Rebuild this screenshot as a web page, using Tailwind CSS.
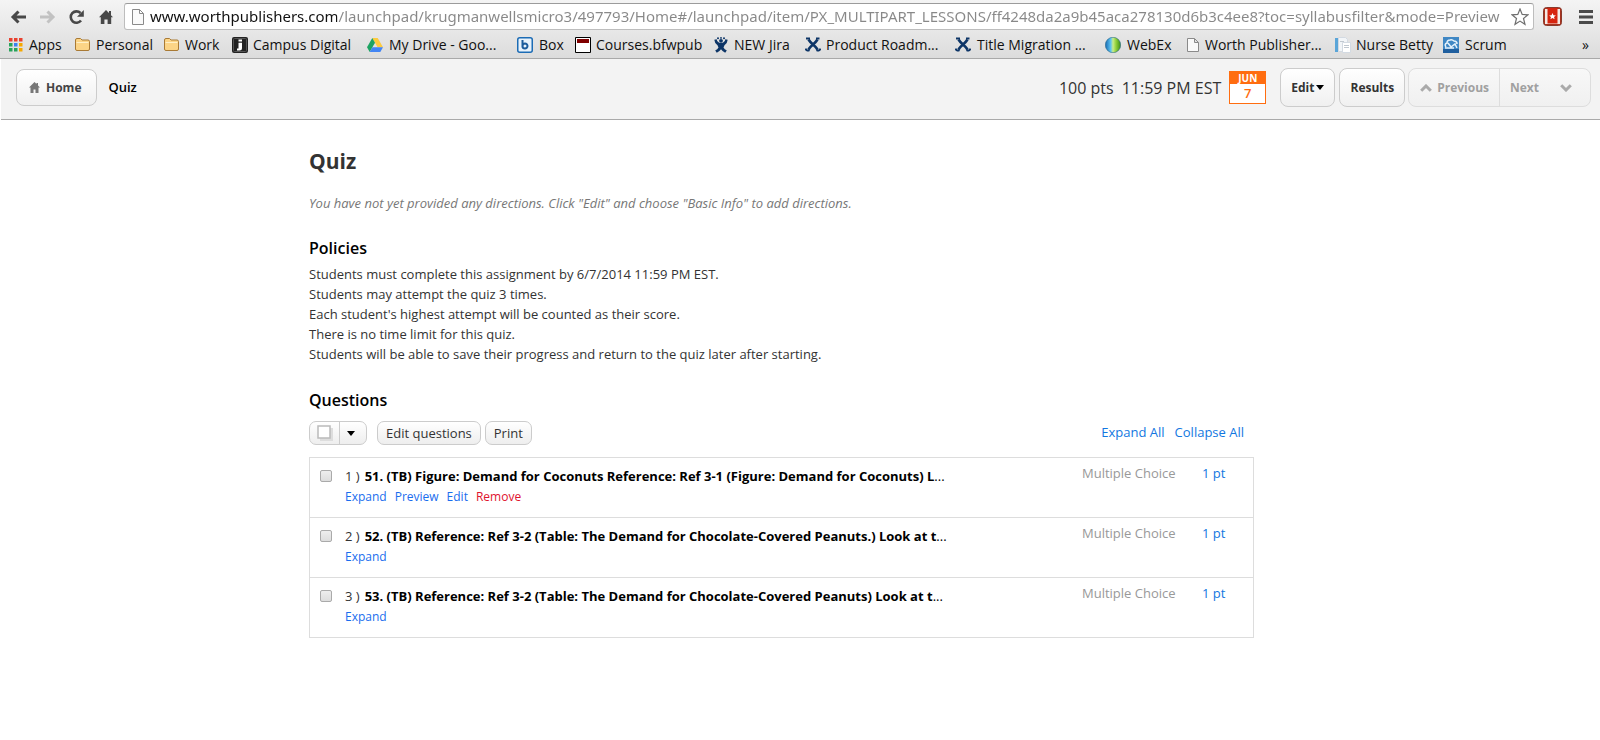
<!DOCTYPE html>
<html lang="en">
<head>
<meta charset="utf-8">
<title>Quiz</title>
<script src="https://cdn.jsdelivr.net/npm/@tailwindcss/browser@4"></script>
</head>
<body class="bg-white font-['Open_Sans',sans-serif] text-[13px] text-[#333]">

<!-- Browser toolbar -->
<div class="border-b border-[#a9a9a9] bg-linear-to-b from-[#f4f4f4] to-[#dcdcdc]">
  <nav class="flex h-[31px] items-center pt-[2px] pl-[10px] pr-[7px]" aria-label="Browser">
    <button class="w-[29px]" aria-label="Back"><svg width="17" height="16" viewBox="0 0 17 16" fill="none" stroke="#484848" stroke-width="3"><path d="M16 8H3M8.500 2.500L3 8l5.500 5.500"/></svg></button>
    <button class="w-[29px]" aria-label="Forward"><svg width="17" height="16" viewBox="0 0 17 16" fill="none" stroke="#c2c2c2" stroke-width="3"><path d="M1 8h13M8.500 2.500L14 8l-5.500 5.500"/></svg></button>
    <button class="w-[30px]" aria-label="Reload"><svg width="17" height="16" viewBox="0 0 17 16"><path d="M13 11.500A5.700 5.700 0 1 1 12.500 4" fill="none" stroke="#484848" stroke-width="2.600"/><path d="M15.800 1v6.800H9z" fill="#484848"/></svg></button>
    <button class="w-[26px]" aria-label="Home page"><svg width="16" height="16" viewBox="0 0 16 16" fill="#484848"><path d="M8 1L1 8.300h1.800V15h3.600v-4.500h3.200V15h3.600V8.300H15L13 6.200V2h-2v2.100z"/></svg></button>
    <div class="flex h-[27px] flex-1 items-center rounded-[3px] border border-[#bdbdbd] border-t-[#9b9b9b] bg-white pl-[7px] pr-[4px]">
      <svg class="shrink-0" width="12" height="16" viewBox="0 0 12 16" fill="#fafafa" stroke="#8a8a8a"><path d="M.5.5h7l4 4v11H.5zM7.500.5v4h4"/></svg>
      <input class="ml-[6px] min-w-0 flex-1 bg-[linear-gradient(to_right,#111_0,#111_187px,#888_187px)] bg-clip-text font-['Noto_Sans',sans-serif] text-[15px] text-transparent outline-none" aria-label="Address" value="www.worthpublishers.com/launchpad/krugmanwellsmicro3/497793/Home#/launchpad/item/PX_MULTIPART_LESSONS/ff4248da2a9b45aca278130d6b3c4ee8?toc=syllabusfilter&amp;mode=Preview">
      <button aria-label="Bookmark this page"><svg width="18" height="18" viewBox="0 0 18 18" fill="#fff" stroke="#6e6e6e" stroke-width="1.200"><path d="M9 1l2.200 5.400 5.800.4-4.500 3.700 1.500 5.800L9 13.100l-5 3.200 1.500-5.800L1 6.800l5.800-.4z"/></svg></button>
    </div>
    <button class="ml-[9px]" aria-label="Extension"><svg width="19" height="19" viewBox="0 0 19 19"><rect x=".5" y=".5" width="18" height="18" rx="3" fill="#a8331f" stroke="#8a3a2c"/><rect x="2" y="2" width="15" height="15" fill="#f4e9e4"/><path d="M4.500 1h10v15.500h-10z" fill="#d6240f"/><path d="M9.500 6l1 2.200 2.400.2-1.900 1.500.6 2.400-2.100-1.300-2.100 1.300.6-2.400-1.900-1.500 2.400-.2z" fill="#fff"/></svg></button>
    <button class="ml-[17px]" aria-label="Menu"><svg width="14" height="14" viewBox="0 0 14 14" fill="#4a4a4a"><path d="M0 0h14v3H0zM0 5.500h14v3H0zM0 11h14v3H0z"/></svg></button>
  </nav>

  <nav class="flex h-[27px] items-center pl-[9px] pr-[11px] text-[14px] whitespace-nowrap text-[#111]" aria-label="Bookmarks">
    <a href="#" class="flex w-[66px] items-center gap-[6px]"><svg width="14" height="14" viewBox="0 0 14 14"><path d="M0 0h3.500v3.500H0zM5 0h3.500v3.500H5zM10 0h3.500v3.500H10z" fill="#e8402e"/><path d="M0 5h3.500v3.500H0zM0 10h3.500v3.500H0zM5 10h3.500v3.500H5z" fill="#28a35a"/><path d="M5 5h3.500v3.500H5z" fill="#3b82f0"/><path d="M10 5h3.500v3.500H10zM10 10h3.500v3.500H10z" fill="#f5a800"/></svg>Apps</a>
    <a href="#" class="flex w-[89px] items-center gap-[6px]"><svg width="15" height="13" viewBox="0 0 15 13"><path d="M.5 11V2q0-1.500 1.500-1.500h3.500L7 2h6q1.500 0 1.500 1.500V11q0 1.500-1.500 1.500H2Q.5 12.500.5 11z" fill="#fcd486" stroke="#a97a35"/><path d="M1.500 4.500h12" stroke="#fff0c8"/></svg>Personal</a>
    <a href="#" class="flex w-[68px] items-center gap-[6px]"><svg width="15" height="13" viewBox="0 0 15 13"><path d="M.5 11V2q0-1.500 1.500-1.500h3.500L7 2h6q1.500 0 1.500 1.500V11q0 1.500-1.500 1.500H2Q.5 12.500.5 11z" fill="#fcd486" stroke="#a97a35"/><path d="M1.500 4.500h12" stroke="#fff0c8"/></svg>Work</a>
    <a href="#" class="flex w-[135px] items-center gap-[5px]"><svg width="16" height="16" viewBox="0 0 16 16"><rect width="16" height="16" rx="2" fill="#222"/><rect x="1.500" y="1.500" width="13" height="13" rx="1" fill="none" stroke="#555"/><path d="M6.500 2.500h3.500v2H6.500zM6.500 5.800h3.500V11q0 2.500-2.500 2.500H5v-2h1.500z" fill="#fff"/></svg>Campus Digital</a>
    <a href="#" class="flex w-[150px] items-center gap-[6px]"><svg width="16" height="14" viewBox="0 0 16 14"><path d="M5.300 0h5.400L16 9.200h-5.400z" fill="#fdcb3f"/><path d="M5.300 0L8 4.700 2.700 14 0 9.200z" fill="#1da362"/><path d="M5.400 9.200H16L13.300 14H2.700z" fill="#4285f4"/></svg>My Drive - Goo...</a>
    <a href="#" class="flex w-[58px] items-center gap-[6px]"><svg width="16" height="16" viewBox="0 0 16 16"><rect x=".75" y=".75" width="14.500" height="14.500" rx="2" fill="#e8f2fb" stroke="#1c6cb5" stroke-width="1.500"/><path d="M5.500 3v7.500M5.500 9a2.500 2.500 0 1 0 5 0 2.500 2.500 0 1 0-5 0" fill="none" stroke="#1c5c9c" stroke-width="2"/></svg>Box</a>
    <a href="#" class="flex w-[139px] items-center gap-[5px]"><svg width="16" height="16" viewBox="0 0 16 16"><path d="M.5.5h15v15H.5z" fill="#fff" stroke="#000"/><path d="M2 2h12v4H2z" fill="#800000"/></svg>Courses.bfwpub</a>
    <a href="#" class="flex w-[91px] items-center gap-[6px]"><svg width="14" height="16" viewBox="0 0 14 16" fill="#0d3567"><circle cx="7" cy="3.800" r="1.900"/><circle cx="4" cy="1.300" r="1"/><circle cx="7" cy=".9" r=".9"/><circle cx="10" cy="1.300" r="1"/><path d="M.3 2.800l2.400-.6q.3 3.300 4.300 3.800 4-.5 4.300-3.800l2.400.6q-.3 3.700-3.200 5.400l-1 2.300q1 2 3.300 3l-1.600 2.200Q8.500 14.500 7 12.200q-1.500 2.300-4.200 3.500l-1.600-2.200q2.300-1 3.300-3l-1-2.300Q.6 6.500.3 2.800z"/></svg>NEW Jira</a>
    <a href="#" class="flex w-[150px] items-center gap-[5px]"><svg width="16" height="16" viewBox="0 0 16 16" fill="none" stroke="#0d3567" stroke-width="2.600"><path d="M3.500 2.500Q5 5 8 7.500t4.500 5M12.500 2.500Q11 5 8 7.500t-4.500 5"/><path d="M1 1.500h4M11 1.500h3.500M.5 11.500q1 3 4 1.500M15.500 11.500q-1 3-4 1.500" stroke-width="2"/></svg>Product Roadm...</a>
    <a href="#" class="flex w-[150px] items-center gap-[6px]"><svg width="16" height="16" viewBox="0 0 16 16" fill="none" stroke="#0d3567" stroke-width="2.600"><path d="M3.500 2.500Q5 5 8 7.500t4.500 5M12.500 2.500Q11 5 8 7.500t-4.500 5"/><path d="M1 1.500h4M11 1.500h3.500M.5 11.500q1 3 4 1.500M15.500 11.500q-1 3-4 1.500" stroke-width="2"/></svg>Title Migration ...</a>
    <a href="#" class="flex w-[82px] items-center gap-[6px]"><svg width="16" height="16" viewBox="0 0 16 16"><defs><linearGradient id="globe"><stop offset="0" stop-color="#1668b0"/><stop offset=".35" stop-color="#5cc3f2"/><stop offset=".5" stop-color="#c9ec8a"/><stop offset=".7" stop-color="#8fd03a"/><stop offset="1" stop-color="#3b8a1c"/></linearGradient></defs><circle cx="8" cy="8" r="7.700" fill="url(#globe)" stroke="#2a6a8a" stroke-width=".6"/></svg>WebEx</a>
    <a href="#" class="flex w-[148px] items-center gap-[6px]"><svg width="12" height="14" viewBox="0 0 12 14" fill="#fafafa" stroke="#8a8a8a"><path d="M.5.5h7l4 4v9H.5zM7.500.5v4h4"/></svg>Worth Publisher...</a>
    <a href="#" class="flex w-[108px] items-center gap-[5px]"><svg width="16" height="16" viewBox="0 0 16 16"><path d="M0 1h3v14H0z" fill="#5aa5d8"/><path d="M3.500.5h7l2 2v12h-9z" fill="#f2f5f8" stroke="#d3dae2"/><path d="M7.500 5.500h8v10h-8z" fill="#fff" stroke="#d3dae2"/><path d="M5 4.500h4M9 8.500h5M9 10.500h5" stroke="#c0c8d0"/></svg>Nurse Betty</a>
    <a href="#" class="flex items-center gap-[6px]"><svg width="16" height="16" viewBox="0 0 16 16"><path d="M0 0h16v16H0z" fill="#3f87c4"/><path d="M0 12h16v4H0z" fill="#1f5f9f"/><path d="M3 10q-2-3 1-4 0-3 3-3 2-1 4 1 3 0 3 3M5 6l3 4 4-3 2 4M2 11h9" fill="none" stroke="#e4f1fb" stroke-width="1.500"/></svg>Scrum</a>
    <button class="ml-auto" aria-label="More bookmarks">»</button>
  </nav>
</div>

<!-- Assignment header -->
<header class="ml-px flex h-[61px] items-center border-b border-[#a9a9a9] bg-[#f3f3f3] pb-[3px] pl-[15px] pr-[9px] text-[12px]">
  <button class="flex h-[37px] items-center gap-[6px] rounded-[8px] border border-[#ccc] bg-linear-to-b from-white to-[#f0f0f0] pl-[12px] pr-[15px] font-bold text-[#444]"><svg width="11" height="11" viewBox="0 0 11 11" fill="#777"><path d="M5.500 0L0 5.500h1.500V11h3V7.500h2V11h3V5.500H11L9 3.500V1H7.500v1z"/></svg>Home</button>
  <h2 class="ml-[11px] text-[13px] font-semibold text-black">Quiz</h2>
  <div class="ml-auto flex items-center text-[16px]">
    <span>100 pts</span><span class="ml-[8px]">11:59 PM EST</span>
    <time datetime="2014-06-07" class="ml-[8px] flex h-[33px] w-[37px] flex-col border border-[#ff6d10] bg-white text-center text-[#ff6d10]"><span class="h-[12px] bg-[#ff6d10] text-[10px] leading-[12px] font-bold text-white">JUN</span><span class="text-[13px] leading-[19px] font-semibold">7</span></time>
  </div>
  <button class="ml-[14px] flex h-[39px] items-center gap-[2px] rounded-[8px] border border-[#ccc] bg-linear-to-b from-white to-[#f0f0f0] px-[10px] font-bold">Edit<svg width="8" height="5" viewBox="0 0 8 5"><path d="M0 0h8L4 5z"/></svg></button>
  <button class="ml-[4px] h-[39px] rounded-[8px] border border-[#ccc] bg-linear-to-b from-white to-[#f0f0f0] px-[10px] font-bold">Results</button>
  <div class="ml-[3px] flex h-[39px] rounded-[8px] border border-[#ddd] bg-linear-to-b from-[#f8f8f8] to-[#f0f0f0] font-bold text-[#a0a0a0]">
    <button class="flex items-center gap-[5px] pl-[11px] pr-[10px]"><svg width="12" height="8" viewBox="0 0 12 8" fill="none" stroke="#aaa" stroke-width="3"><path d="M1.200 6.800L6 2l4.800 4.800"/></svg>Previous</button>
    <button class="flex items-center gap-[21px] border-l border-[#ddd] pl-[10px] pr-[18px]">Next<svg width="12" height="8" viewBox="0 0 12 8" fill="none" stroke="#aaa" stroke-width="3"><path d="M1.200 1.200L6 6l4.800-4.800"/></svg></button>
  </div>
</header>

<main class="mx-auto max-w-[982px] pr-[37px] pt-[26px]">
  <h1 class="text-[21px] leading-[30px] font-bold">Quiz</h1>
  <p class="mt-[17px] leading-[20px] text-[#777] italic">You have not yet provided any directions. Click "Edit" and choose "Basic Info" to add directions.</p>

  <h3 class="mt-[24px] text-[16px] leading-[22px] font-semibold text-black">Policies</h3>
  <ul class="mt-[5px] leading-[20px]">
    <li>Students must complete this assignment by 6/7/2014 11:59 PM EST.</li>
    <li>Students may attempt the quiz 3 times.</li>
    <li>Each student's highest attempt will be counted as their score.</li>
    <li>There is no time limit for this quiz.</li>
    <li>Students will be able to save their progress and return to the quiz later after starting.</li>
  </ul>

  <h3 class="mt-[25px] text-[16px] leading-[22px] font-semibold text-black">Questions</h3>
  <div class="mt-[10px] flex items-center">
    <div class="flex h-[24px] w-[58px] rounded-[7px] border border-[#ccc] bg-linear-to-b from-white to-[#eee]">
      <button class="flex w-[30px] items-center justify-center border-r border-[#ccc]" aria-label="Select all"><svg width="16" height="16" viewBox="0 0 16 16"><path d="M3 3h13v13H3z" fill="#ddd"/><path d="M1 1h12v12H1z" fill="#fff" stroke="#bbb" stroke-width="1.500"/></svg></button>
      <button class="flex flex-1 items-center justify-center pr-[4px]" aria-label="Selection options"><svg width="8" height="5" viewBox="0 0 8 5"><path d="M0 0h8L4 5z"/></svg></button>
    </div>
    <button class="ml-[10px] h-[24px] rounded-[7px] border border-[#ccc] bg-linear-to-b from-white to-[#eee] px-[8px] leading-[20px]">Edit questions</button>
    <button class="ml-[4px] h-[24px] rounded-[7px] border border-[#ccc] bg-linear-to-b from-white to-[#eee] px-[8px] leading-[20px]">Print</button>
    <div class="ml-auto flex gap-[10px] pr-[10px] text-[#1277e1]"><a href="#">Expand All</a><a href="#">Collapse All</a></div>
  </div>

  <ul class="mt-[12px] border border-[#ddd]">
    <li class="flex h-[60px] border-b border-[#ddd] pt-[5px]">
      <input id="q1" type="checkbox" class="mt-[7px] ml-[10px] size-[12px] appearance-none rounded-[2px] border border-[#aaa] bg-linear-to-b from-[#eee] to-[#ddd]">
      <div class="ml-[13px] flex-1">
        <label for="q1" class="flex items-center gap-[5px] leading-[26px]"><span>1 )</span><span class="text-black"><b>51. (TB) Figure: Demand for Coconuts Reference: Ref 3-1 (Figure: Demand for Coconuts) L</b>...</span></label>
        <div class="flex gap-[8px] text-[12px] leading-[16px] text-[#1a6dee]"><a href="#">Expand</a><a href="#">Preview</a><a href="#">Edit</a><a href="#" class="text-[#e0122d]">Remove</a></div>
      </div>
      <span class="w-[120px] leading-[20px] text-[#999]">Multiple Choice</span>
      <a href="#" class="w-[51px] leading-[20px] text-[#1277e1]">1 pt</a>
    </li>
    <li class="flex h-[60px] border-b border-[#ddd] pt-[5px]">
      <input id="q2" type="checkbox" class="mt-[7px] ml-[10px] size-[12px] appearance-none rounded-[2px] border border-[#aaa] bg-linear-to-b from-[#eee] to-[#ddd]">
      <div class="ml-[13px] flex-1">
        <label for="q2" class="flex items-center gap-[5px] leading-[26px]"><span>2 )</span><span class="text-black"><b>52. (TB) Reference: Ref 3-2 (Table: The Demand for Chocolate-Covered Peanuts.) Look at t</b>...</span></label>
        <div class="flex gap-[8px] text-[12px] leading-[16px] text-[#1a6dee]"><a href="#">Expand</a></div>
      </div>
      <span class="w-[120px] leading-[20px] text-[#999]">Multiple Choice</span>
      <a href="#" class="w-[51px] leading-[20px] text-[#1277e1]">1 pt</a>
    </li>
    <li class="flex h-[59px] pt-[5px]">
      <input id="q3" type="checkbox" class="mt-[7px] ml-[10px] size-[12px] appearance-none rounded-[2px] border border-[#aaa] bg-linear-to-b from-[#eee] to-[#ddd]">
      <div class="ml-[13px] flex-1">
        <label for="q3" class="flex items-center gap-[5px] leading-[26px]"><span>3 )</span><span class="text-black"><b>53. (TB) Reference: Ref 3-2 (Table: The Demand for Chocolate-Covered Peanuts) Look at t</b>...</span></label>
        <div class="flex gap-[8px] text-[12px] leading-[16px] text-[#1a6dee]"><a href="#">Expand</a></div>
      </div>
      <span class="w-[120px] leading-[20px] text-[#999]">Multiple Choice</span>
      <a href="#" class="w-[51px] leading-[20px] text-[#1277e1]">1 pt</a>
    </li>
  </ul>
</main>
</body>
</html>
